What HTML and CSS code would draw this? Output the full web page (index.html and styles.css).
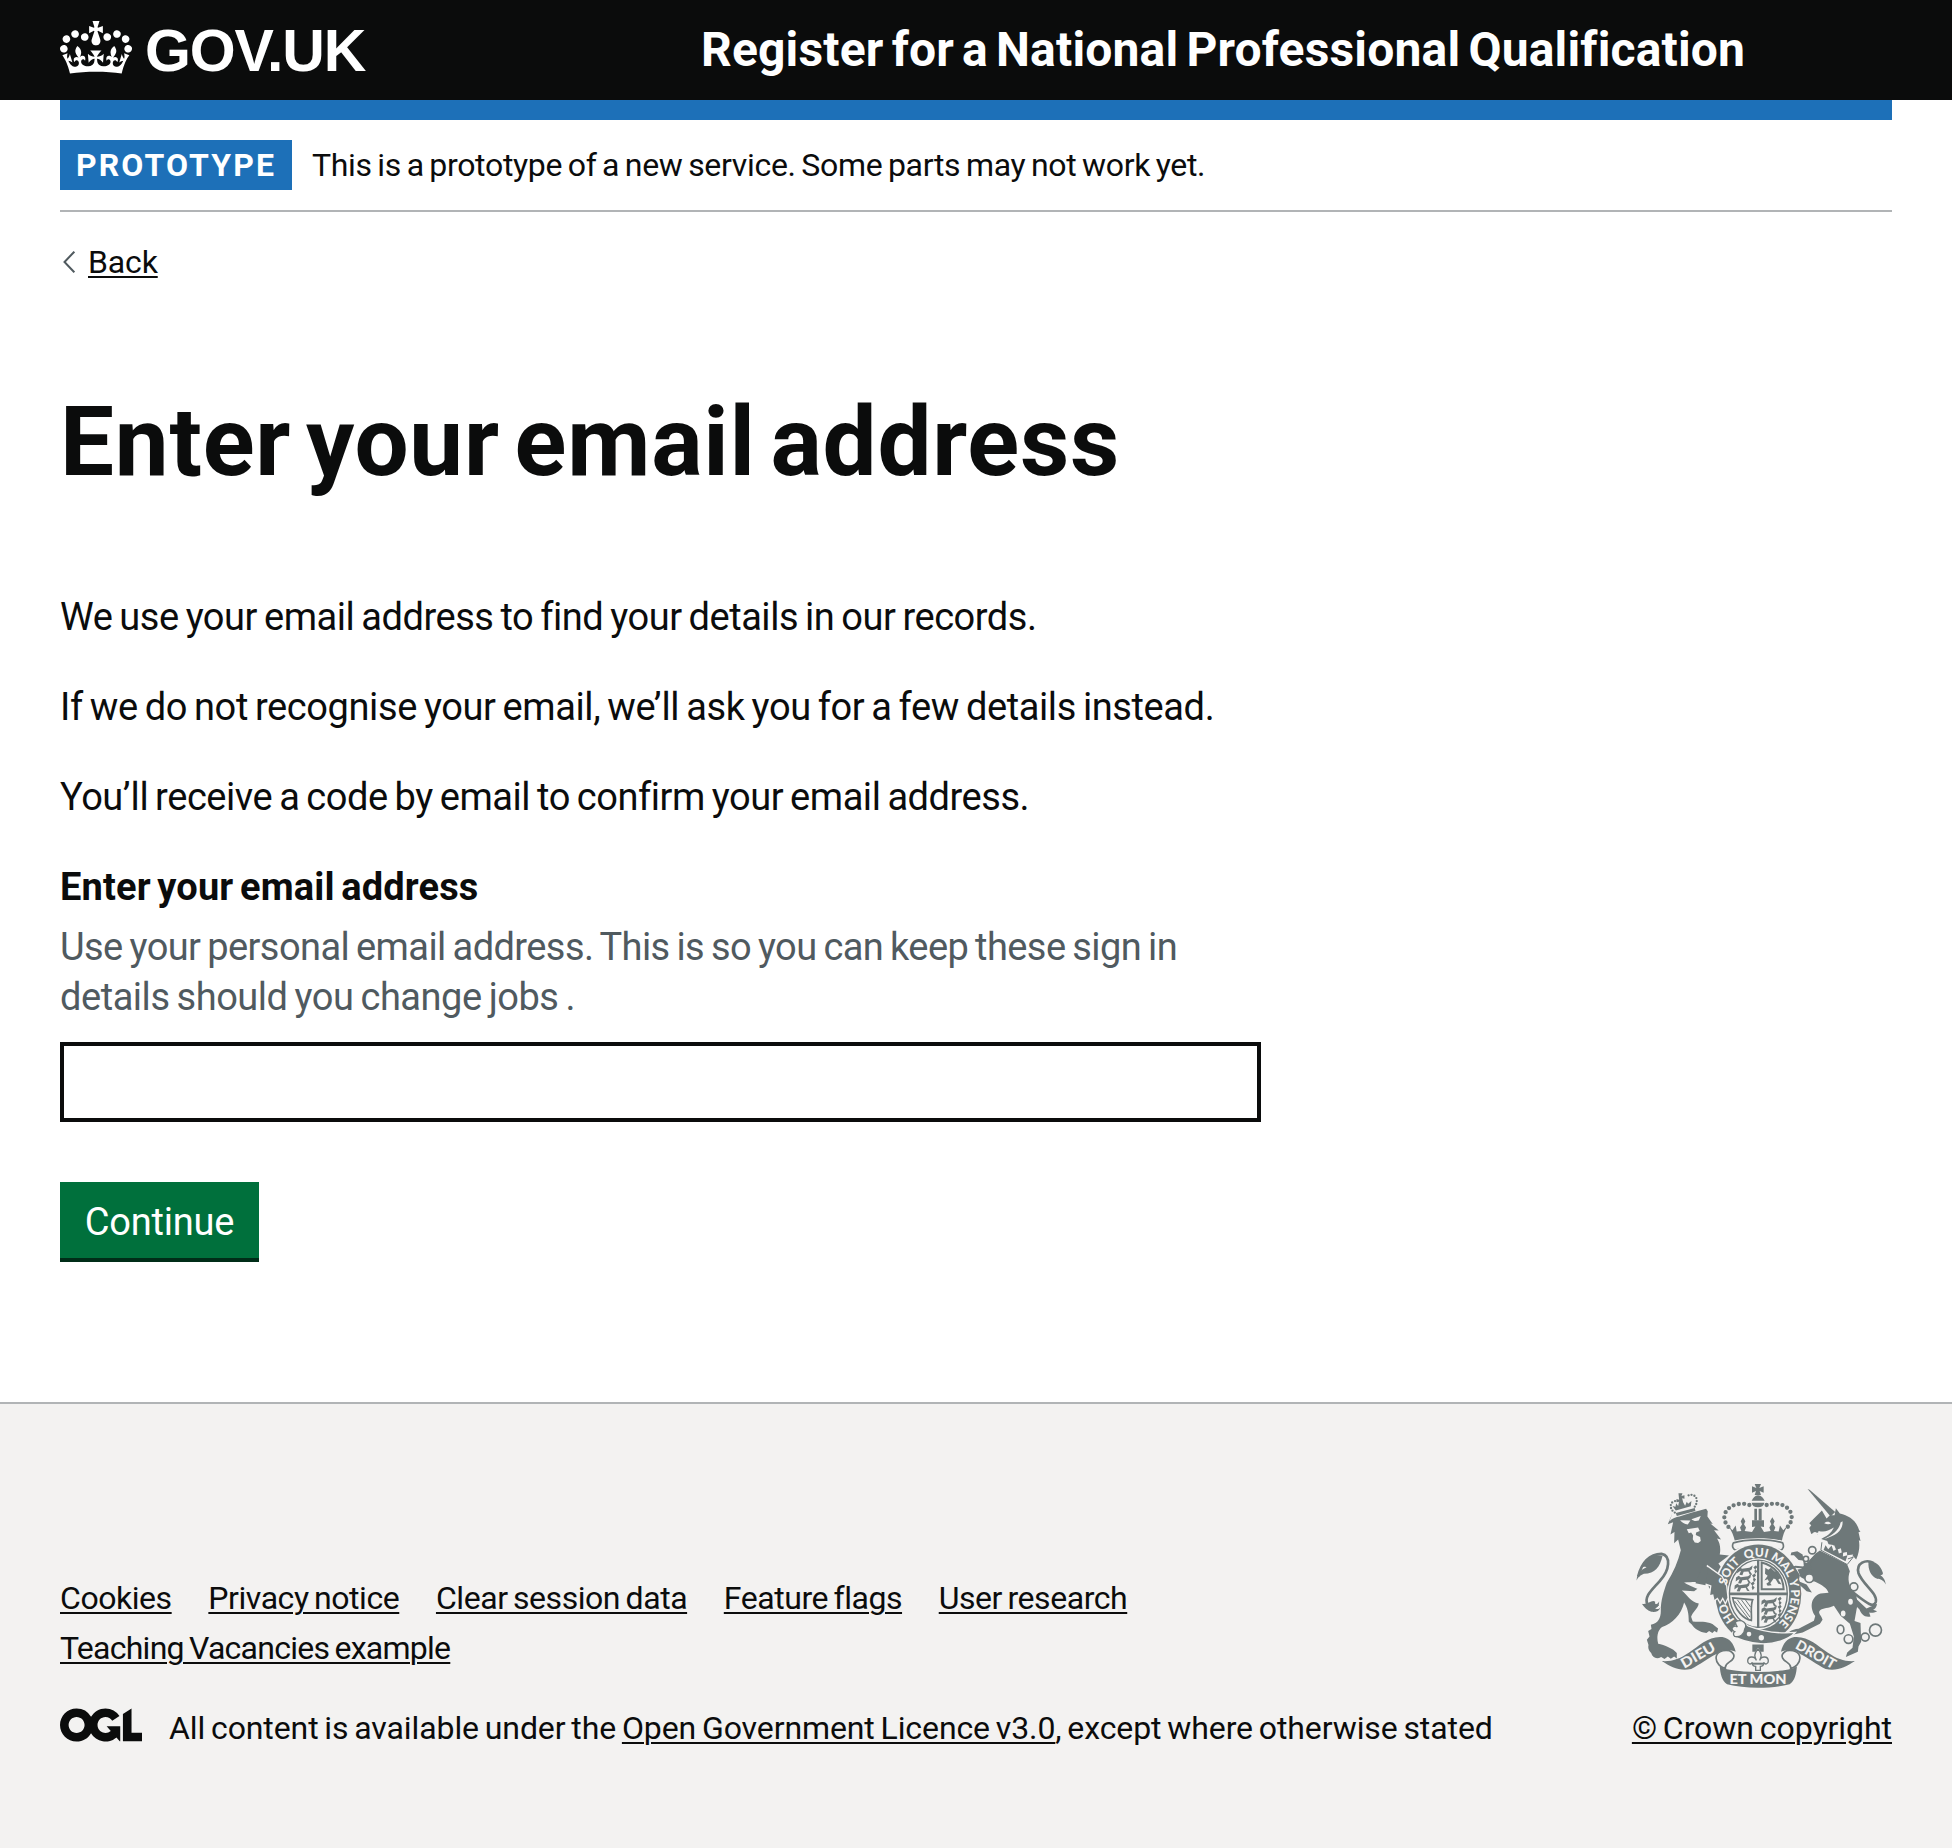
FILE: index.html
```html
<!DOCTYPE html>
<html lang="en">
<head>
<meta charset="utf-8">
<title>Enter your email address - Register for a National Professional Qualification</title>
<link rel="stylesheet" href="styles.css">
</head>
<body>
<header class="header">
  <div class="header-inner">
    <a class="logo" href="#">
      <svg class="logo-crown" viewBox="0 0 132 97" aria-hidden="true"><path fill="currentColor" fill-rule="evenodd" d="M25 30.2c3.5 1.5 7.7-.2 9.1-3.7 1.5-3.6-.2-7.8-3.9-9.2-3.6-1.4-7.6.3-9.1 3.9-1.4 3.5.3 7.5 3.9 9zM9 39.5c3.6 1.5 7.8-.2 9.2-3.7 1.5-3.6-.2-7.8-3.9-9.1-3.6-1.5-7.6.2-9.1 3.8-1.4 3.5.3 7.5 3.8 9zM4.4 57.2c3.5 1.5 7.7-.2 9.1-3.8 1.5-3.6-.2-7.7-3.9-9.1-3.5-1.5-7.6.3-9.1 3.8-1.4 3.5.3 7.6 3.9 9.1zm38.3-21.4c3.5 1.5 7.7-.2 9.1-3.8 1.5-3.6-.2-7.7-3.9-9.1-3.6-1.5-7.6.3-9.1 3.8-1.3 3.6.4 7.7 3.9 9.1zm64.4-5.6c-3.6 1.5-7.8-.2-9.1-3.7-1.5-3.6.2-7.8 3.8-9.2 3.6-1.4 7.7.3 9.2 3.9 1.3 3.5-.4 7.5-3.9 9zm15.9 9.3c-3.6 1.5-7.7-.2-9.1-3.7-1.5-3.6.2-7.8 3.7-9.1 3.6-1.5 7.7.2 9.2 3.8 1.5 3.5-.3 7.5-3.8 9zm4.7 17.7c-3.6 1.5-7.8-.2-9.2-3.8-1.5-3.6.2-7.7 3.9-9.1 3.6-1.5 7.7.3 9.2 3.8 1.3 3.5-.4 7.6-3.9 9.1zM89.3 35.8c-3.6 1.5-7.8-.2-9.2-3.8-1.4-3.6.2-7.7 3.9-9.1 3.6-1.5 7.7.3 9.2 3.8 1.4 3.6-.3 7.7-3.9 9.1zM69.7 17.7l8.9 4.7V9.3l-8.9 2.8c-.2-.3-.5-.6-.9-.9L72.4 0H59.6l3.5 11.2c-.3.3-.6.5-.9.9l-8.8-2.8v13.1l8.8-4.7c.3.3.6.7.9.9l-5 15.4v.1c-.2.8-.4 1.6-.4 2.4 0 4.1 3.1 7.5 7 8.1h.2c.3 0 .7.1 1 .1.4 0 .7 0 1-.1h.2c4-.6 7.1-4.1 7.1-8.1 0-.8-.1-1.7-.4-2.4V34l-5.1-15.4c.4-.2.7-.6 1-.9zM66 92.8c16.9 0 32.8 1.1 47.1 3.2 4-16.9 8.9-26.7 14-33.5l-9.6-3.4c1 4.9 1.1 7.2 0 10.2-1.5-1.4-3-4.3-4.2-8.7L108.6 76c2.8-2 5-3.2 7.5-3.3-4.4 9.4-10 11.9-13.6 11.2-4.3-.8-6.3-4.6-5.6-7.9 1-4.7 5.7-5.9 8-.5 4.3-8.7-3-11.4-7.6-8.8 7.1-7.2 7.9-13.5 2.1-21.1-8 6.1-8.1 12.3-4.5 20.8-4.7-5.4-12.1-2.5-9.5 6.2 3.4-5.2 7.9-2 7.2 3.1-.6 4.3-6.4 7.8-13.5 7.2-10.3-.9-10.9-8-11.2-13.8 2.5-.5 7.1 1.8 11 7.3L80.2 60c-4.1 4.4-8 5.3-12.3 5.4 1.4-4.4 8-11.6 8-11.6H55.5s6.4 7.2 7.9 11.6c-4.2-.1-8-1-12.3-5.4l1.4 16.4c3.9-5.5 8.5-7.7 10.9-7.3-.3 5.8-.9 12.8-11.1 13.8-7.2.6-12.9-2.9-13.5-7.2-.7-5 3.8-8.3 7.1-3.1 2.7-8.7-4.6-11.6-9.4-6.2 3.7-8.5 3.6-14.7-4.6-20.8-5.8 7.6-5 13.9 2.2 21.1-4.7-2.6-11.9.1-7.7 8.8 2.3-5.5 7.1-4.2 8.1.5.7 3.3-1.3 7.1-5.7 7.9-3.5.7-9-1.8-13.5-11.2 2.5.1 4.7 1.3 7.5 3.3l-4.7-15.4c-1.2 4.4-2.7 7.2-4.3 8.7-1.1-3-.9-5.3 0-10.2l-9.5 3.4c5 6.9 9.9 16.7 14 33.5 14.8-2.1 30.8-3.2 47.7-3.2z"/></svg>
      <span class="logo-text">GOV.UK</span>
    </a>
    <a class="service-name" href="#">Register for a National Professional Qualification</a>
  </div>
</header>

<div class="width">
  <div class="header-bar"></div>
  <div class="phase-banner">
    <strong class="tag">PROTOTYPE</strong>
    <span class="phase-text">This is a prototype of a new service. Some parts may not work yet.</span>
  </div>
  <a class="back-link" href="#">
    <svg class="back-arrow" viewBox="0 0 12 22" aria-hidden="true"><path d="M11.3 .7 1.5 11l9.8 10.3" fill="none" stroke="#505a5f" stroke-width="2"/></svg>
    <span class="link">Back</span>
  </a>

  <main class="main">
    <h1 class="title">Enter your email address</h1>
    <p class="body-text">We use your email address to find your details in our records.</p>
    <p class="body-text body-text-loose">If we do not recognise your email, we’ll ask you for a few details instead.</p>
    <p class="body-text">You’ll receive a code by email to confirm your email address.</p>
    <form class="form">
      <label class="label" for="email">Enter your email address</label>
      <div class="hint">Use your personal email address. This is so you can keep these sign in<br><span class="hint-end">details should you change jobs .</span></div>
      <input class="input" id="email" type="email">
      <button class="button" type="button">Continue</button>
    </form>
  </main>
</div>

<footer class="footer">
  <div class="footer-inner">
    <div class="footer-main">
      <ul class="footer-links">
        <li><a class="link tight" href="#">Cookies</a></li>
        <li><a class="link tight" href="#">Privacy notice</a></li>
        <li><a class="link tight" href="#">Clear session data</a></li>
        <li><a class="link tight" href="#">Feature flags</a></li>
        <li><a class="link tight" href="#">User research</a></li>
        <li><a class="link tighter" href="#">Teaching Vacancies example</a></li>
      </ul>
      <div class="licence">
        <svg class="ogl" viewBox="0 0 483.2 195.7" aria-label="Open Government Licence"><path fill="currentColor" d="M421.5 142.8V.1l-50.7 32.3v161.1h112.4v-50.7zm-122.3-9.6A47.12 47.12 0 0 1 221 97.8c0-26 21.1-47.1 47.1-47.1 16.7 0 31.4 8.7 39.7 21.8l42.7-27.2A97.63 97.63 0 0 0 268.1 0c-36.5 0-68.3 20.1-85.1 49.7A98 98 0 0 0 97.8 0C43.9 0 0 43.9 0 97.8s43.9 97.8 97.8 97.8c36.5 0 68.3-20.1 85.1-49.7a97.76 97.76 0 0 0 149.6 25.4l19.4 22.2h3v-87.8h-80l24.3 27.5zM97.8 145c-26 0-47.1-21.1-47.1-47.1s21.1-47.1 47.1-47.1 47.1 21.1 47.1 47.1S123.8 145 97.8 145"/></svg>
        <span>All content is available under the <a class="link" href="#">Open Government Licence v3.0</a>, except where otherwise stated</span>
      </div>
    </div>
    <div class="copyright">
      <svg class="arms" viewBox="78 72 750 613" aria-hidden="true">
        <defs>
          <path id="garter" d="M445 514C391 514 347 464 347 402S391 290 445 290 543 340 543 402 499 514 445 514"/>
          <g id="walker"><path d="M2 8l8-5 6 4 22-3 10-7-3 12-6 4 8 12-8-1-4-9-14 1-4 10-9-1 5-12-5 2-7 5zM50 2l8-6 4 6-6 6 6 6-6 8-3-8 2-5z"/></g>
        </defs>
        <g class="arms-fill">
          <!-- centre crown -->
          <path d="M434 72h19l-5 12 13-5v19l-12-5 4 12h-19l4-12-12 5V79l13 5zM425 122c4-8 10-15 19-16 10 1 16 8 20 16zM425 128h38c-1 9-8 14-19 14s-18-5-19-14zM433 146h8v36h-8zM446 146h9v36h-9z"/>
          <path class="beads" d="M418 135C392 126 358 134 346 158c-8 17 0 34 12 46M470 135c28-9 60-2 72 22 8 18 0 34-11 47"/>
          <path d="M354 197l13 14 10-14 3 18 14-2-4-10 6-10-4-9 7-12 7 12-4 9 6 10-4 10 22 3 10-16-10 1v-20h36v20l-10-1 10 16 20-3-4-10 6-10-4-9 7-12 7 12-4 9 6 10-4 10 14 2 4-18 10 14 13-14c-10 18-15 32-17 45-40-9-104-9-142 0-3-13-9-29-20-45z"/>
          <path d="M370 249c-6 10 0 20 8 22 40-18 94-18 133 0 9-3 12-12 7-22-35-12-111-12-148 0z" fill="none" stroke="#6e7879" stroke-width="5"/>
          <!-- lion -->
          <path d="M197 159l57-15 2 9-56 15z"/>
          <path class="beads small" d="M194 158c-14-8-16-26-6-32 8-4 14-4 20-1M254 140c8-10 8-26 0-32-8-5-16-4-22 0"/>
          <path d="M205 100h12l-3 8 9-2v10l-7-1 3 12 6 10 5-12 4 6 10-8-2 16-45 13-10-14 9 2 2-10 6 8 3-14-8 3v-10l8 2z"/>
          <path d="M178 184c8-8 20-13 30-14 24-10 50-16 80-24l5 8-1 16 16 22-7-1 25 21-14-1 21 28-12-3c8 12 12 30 8 48l28 3-32 24 28 38 9 45-5 18-12 14-5-15-14 9-5-18-10 4-3-22-11 2c0-20-28-22-75-18 20 12 34 16 40 19l-10 7-37-2c17 14 27 35 51 39-3 17-18 24-23 40l5 14c22 2 39-2 59 8l17 13-3 12-8-4-6 6-10-6-8 6c-22-4-34-12-44-26l-9-8c0-28-4-42-14-58-8 36-36 64-66 74-12 8-18 28-12 50 18 4 46 14 56 28l0 16-8-6-10 7-9-7-10 8-10-6c-14 8-26 2-30-12-8-8-10-16-8-24l-5-16 8-10-4-16 10-6-2-13c22-4 30-20 30-42-1-26 8-56 18-84 20-32 34-64 42-98l-8-32-12 11 1-34-12 8 8-37-16 6 14-34z"/>
          <path class="tail" d="M84 350c10-40 34-66 70-68 30 6 24 50-4 80-24 28-50 48-38 72 8 14 20 10 32 0"/>
          <path d="M79 362c2-24 14-32 30-40-6-2-12-2-16 2 8-28 32-44 64-36-8 34-22 52-56 54-10 4-18 10-22 20zM95 432c18 4 30-14 40-6-2 12 8 8 12-2 0 14-6 18-12 22 10 4 12 0 16-4-4 12-14 16-28 14-12-4-20-12-28-24z"/>
          <path class="cut" d="M210 181l31 1-8 12c-10-2-18-6-23-13zM244 178l28-10-6 14c-8 2-16 2-22-4zM230 208l34-5 5 10-11 5-1 7 13 6 2 12-8 6-10-1-6-10 1-12-6-8-7 2z"/>
          <!-- unicorn body -->
          <path d="M618 280l12-8 82 42 8 20c-8 22-4 44 12 62 10 14 14 34 8 54l-6 34 18 6 2 56-8 14-2 16-36 16 4-14 16-14 4-34-12-38-28-24-20-30c-14 8-34 6-42 14-8 8 6 16 8 28l-8 12-52 26-34 8-18 12-6-3c10-16 24-26 46-28l46-24 4-14c-20-30-10-60 16-68l24-2c-4-14-20-24-42-34l-22-2-22-12-24 2 0-20 28-6z"/>
          <path class="tail" d="M724 394C760 420 790 450 798 426c6-26-38-50-52-86-8-30 22-44 46-30"/>
          <path d="M776 304c20 0 36 12 42 32 4 8-2 10-6 10 8 6 14 12 16 28-8-14-16-16-26-17-18-8-28-26-26-53zM742 420l28 26 32-14c-2 10-6 16-12 18l12 4c-10 6-18 6-24 4l4 12c-18 4-28-8-33-21l-14-14z"/>
          <g class="cut"><circle cx="732" cy="381" r="9"/><ellipse cx="722" cy="426" rx="7" ry="9"/><ellipse cx="700" cy="461" rx="7" ry="9"/></g>
          <g fill="none" stroke="#6e7879" stroke-width="5"><circle cx="732" cy="381" r="12"/><ellipse cx="692" cy="509" rx="10" ry="13"/><circle cx="716" cy="538" r="13"/><circle cx="766" cy="532" r="12"/><circle cx="797" cy="511" r="18"/></g>
          <!-- unicorn head -->
          <path d="M593 87l6 2 77 67-14 14z"/>
          <path d="M650 176l10-10 14 0 4-21 12 16c28 6 50 22 58 50l4 4-6 2 6 26-5-2c3 14 2 36-8 58l-9-10-12 4-10-12-12 0-10-12-10-2-6-12-14-2-4-10-18-6c16-8 30-16 38-34-20 12-30 14-46 10l-3 11-7-8-12 6-6-18 6-8-6-6 14-14 16-16 8-8z"/>
          <path d="M698 184c2 26-16 42-56 54 28-14 46-28 50-50z" class="cut"/>
          <path d="M643 190c8-7 15-5 21 0-6 4-12 4-21 0zM610 217l22 2-16 6z" class="cut"/>
          <!-- unicorn collar -->
          <path d="M636 248l7 10 9-9 10 13 11-6 6 14 14-5 3 14 15-3 1 10 18-2-12 32-86-44z" class="cut"/>
          <path d="M636 247l-3 24 79 43 18-22-16 5" fill="none" stroke="#6e7879" stroke-width="3"/>
          <path d="M641 270l6-14 8 12 10-11 6 16 12-8 4 16 13-5-1 14 14-4-6 18z"/>
          <!-- garter and shield -->
          <ellipse class="cut" cx="445" cy="402" rx="134" ry="153"/>
          <ellipse cx="445" cy="402" rx="129" ry="148"/>
          <ellipse class="cut" cx="445" cy="402" rx="93" ry="107"/>
          <ellipse cx="445" cy="402" rx="87" ry="101" fill="none" stroke="#6e7879" stroke-width="4"/>
          <path d="M441 300h7v205h-7zM358 398h174v8H358z"/>
          <use href="#walker" x="380" y="320"/><use href="#walker" x="376" y="345"/><use href="#walker" x="372" y="369"/>
          <use href="#walker" x="453" y="415"/><use href="#walker" x="453" y="439"/><use href="#walker" x="453" y="463"/>
          <path d="M455 308v80h66c-2-42-28-70-66-80z" fill="none" stroke="#6e7879" stroke-width="6"/>
          <path d="M466 324l9 6 8-6 10 10 14 2-4 6 10 12-8 6 10 14-10-2-8-14-6-2-10 14 4 6-12 2-4-6 8-6-4-8-10 4 10-14-8-6z"/>
          <path d="M368 414l60 6c-8 20-2 44-4 62-24-4-50-32-56-68z" fill="none" stroke="#6e7879" stroke-width="5"/>
          <path d="M382 420l38 52M394 420l28 38M406 420l16 22M374 424l42 54" fill="none" stroke="#6e7879" stroke-width="3"/>
          <path d="M374 500l20-14 20 12c50 20 98 24 142 20-22 22-62 36-104 34-30-2-58-8-86-26z" stroke="#f3f2f1" stroke-width="4"/>
          <path d="M376 486c22-10 38 6 28 22 0 16-16 26-30 22-6-6-4-12 0-14-8-4-10-10-6-14 6-4 10-4 14 0-4-6-6-10-6-16z" class="cut" stroke="#6e7879" stroke-width="4"/>
          <circle class="cut" cx="417" cy="523" r="7"/><circle class="cut" cx="454" cy="534" r="8"/>
          <!-- lion foreleg and unicorn hooves resting on the garter -->
          <path d="M292 318l44 32 14 28 4 36-8 18-8-16-8 14-8-14-10 8-4-18-10 2 4-30-30-10z" stroke="#f3f2f1" stroke-width="4"/>
          <path d="M280 312l14 12-8 52-30-6z"/>
          <path d="M618 280l-18 22 6 30-24-10-2-20-14-2-14-14-10 0 2-8 18-4 16 10 4 22 18 8zM606 322l-28 4-22-2 14 22-4 18 24 10 16 24-16-4-18-16-20-12-4-24-8-18 16-6z"/>
          <g class="cut" stroke="#6e7879" stroke-width="5"><circle cx="607" cy="271" r="11"/><circle cx="588" cy="297" r="8"/><circle cx="598" cy="355" r="13"/></g>
          <!-- badge under the garter -->
          <path d="M427 554h34v22h-9l-8-12-8 12h-9z"/>
          <path d="M444 568c-14 14-10 24-5 34-4-14-26-14-26 2 0 10 10 12 14 4 0 10 6 12 10 12v12h14v-12c4 0 10-2 10-12 4 8 14 6 14-4 0-16-22-16-26-2 5-10 9-20-5-34z" fill="#f3f2f1" stroke="#6e7879" stroke-width="4"/><path d="M428 609h32v6h-32z"/>
          <!-- motto ribbon -->
          <path d="M155 604c30 2 52-6 82-26 30-20 60-50 100-46 22 4 34 20 40 44-22-8-48-4-56 6-30 14-50 32-78 46-34 8-60-6-88-24zM735 604c-30 2-52-6-82-26-30-20-60-50-100-46-22 4-34 20-40 44 22-8 48-4 56 6 30 14 50 32 78 46 34 8 60-6 88-24z"/>
          <path class="cut" d="M358 573c-22-4-40 6-40 22s14 28 28 32c-4-18 18-18 24-32 4-8 0-16-12-22zM530 573c22-4 40 6 40 22s-14 28-28 32c4-18-18-18-24-32-4-8 0-16 12-22z" stroke="#6e7879" stroke-width="5"/>
          <path d="M329 620c8 6 18 10 30 10 56 9 114 9 172 0 12 0 22-4 30-10-2 22-6 44-22 54-58 14-134 14-188 0-16-10-20-32-22-54z"/>
        </g>
        <g class="motto">
          <text><textPath href="#garter" startOffset="16.5%">HO</textPath></text>
          <text><textPath href="#garter" startOffset="35%">SOIT</textPath></text>
          <text><textPath href="#garter" startOffset="49%">QUI</textPath></text>
          <text><textPath href="#garter" startOffset="61.5%">MAL</textPath></text>
          <text><textPath href="#garter" startOffset="70.5%">Y</textPath></text>
          <text><textPath href="#garter" startOffset="81.5%">PENSE</textPath></text>
          <text class="motto-large" transform="translate(271 599) rotate(-30)" textLength="112" lengthAdjust="spacingAndGlyphs">DIEU</text>
          <text class="motto-large" transform="translate(611 597) rotate(29)" textLength="132" lengthAdjust="spacingAndGlyphs">DROIT</text>
          <text class="motto-large" transform="translate(444 673)" textLength="172" lengthAdjust="spacingAndGlyphs">ET MON</text>
        </g>
      </svg>
      <a class="link crown-link" href="#">© Crown copyright</a>
    </div>
  </div>
</footer>
</body>
</html>
```
FILE: styles.css
```css
* {
  box-sizing: border-box;
}

body {
  margin: 0;
  background: #fff;
  color: #0b0c0c;
  font-family: Roboto, "Noto Sans", sans-serif;
  font-size: 32px;
  line-height: 40px;
  word-spacing: -2px;
}

.link {
  color: #0b0c0c;
  text-decoration: underline;
  text-decoration-thickness: 2px;
  text-underline-offset: 3px;
}

.tight {
  letter-spacing: -0.45px;
}

.tighter {
  letter-spacing: -0.74px;
}

.width {
  margin: 0 60px;
}

/* Header */
.header {
  height: 100px;
  padding: 0 60px;
  background: #0b0c0c;
}

.header-inner {
  display: grid;
  grid-template-columns: 641px 1fr;
  align-items: start;
}

.logo {
  display: flex;
  gap: 13px;
  padding-top: 20px;
  color: #fff;
  text-decoration: none;
}

.logo-crown {
  width: 72px;
  height: 53px;
  margin-top: 1px;
}

.logo-text {
  font-family: "Liberation Sans", Arial, sans-serif;
  font-size: 59px;
  font-weight: 700;
  line-height: 62px;
  letter-spacing: -1.2px;
}

.service-name {
  padding-top: 20px;
  color: #fff;
  font-size: 48px;
  font-weight: 700;
  line-height: 60px;
  letter-spacing: 0.17px;
  word-spacing: -4px;
  text-decoration: none;
  white-space: nowrap;
}

.header-bar {
  height: 20px;
  background: #1d70b8;
}

/* Phase banner */
.phase-banner {
  display: flex;
  gap: 20px;
  padding: 20px 0;
  border-bottom: 2px solid #b1b4b6;
  line-height: 50px;
}

.tag {
  width: 232px;
  height: 50px;
  padding-left: 16px;
  background: #1d70b8;
  color: #fff;
  line-height: 51px;
  letter-spacing: 2.1px;
}

.phase-text {
  letter-spacing: -0.32px;
}

.back-link {
  display: flex;
  align-items: center;
  gap: 13px;
  width: max-content;
  margin-top: 30px;
  padding-left: 3px;
  text-decoration: none;
  letter-spacing: -0.15px;
}

.back-arrow {
  width: 12px;
  height: 22px;
}

/* Main content */
.main {
  padding: 110px 0 140px;
}

.title {
  margin: 0 0 100px;
  font-size: 96px;
  font-weight: 700;
  line-height: 100px;
  letter-spacing: 0.8px;
  word-spacing: -10px;
}

.body-text {
  margin: 0 0 40px;
  font-size: 38px;
  line-height: 50px;
  letter-spacing: -0.46px;
}

.body-text-loose {
  letter-spacing: -0.4px;
}

.form {
  display: flex;
  flex-direction: column;
  align-items: flex-start;
  font-size: 38px;
  line-height: 50px;
}

.label {
  margin-bottom: 10px;
  font-weight: 700;
  letter-spacing: 0.15px;
  word-spacing: -3px;
}

.hint {
  margin-bottom: 20px;
  color: #505a5f;
  letter-spacing: -0.58px;
}

.hint-end {
  letter-spacing: -0.46px;
}

.input {
  width: 1201px;
  height: 80px;
  margin: 0 0 60px;
  padding: 10px;
  border: 4px solid #0b0c0c;
  border-radius: 0;
  background: #fff;
  font: inherit;
}

.button {
  width: 199px;
  height: 76px;
  margin: 0 0 4px;
  padding: 3px 0 0;
  border: 0;
  background: #00703c;
  box-shadow: 0 4px 0 #002d18;
  color: #fff;
  font: inherit;
  letter-spacing: -0.2px;
}

/* Footer */
.footer {
  padding: 80px 60px 100px;
  border-top: 2px solid #b1b4b6;
  background: #f3f2f1;
}

.footer-inner {
  display: flex;
  justify-content: space-between;
  align-items: flex-end;
}

.footer-links {
  display: flex;
  flex-wrap: wrap;
  column-gap: 36.7px;
  width: 1240px;
  margin: 0 0 35px;
  padding: 0;
  list-style: none;
  line-height: 50px;
}

.licence {
  display: flex;
  gap: 27px;
  letter-spacing: -0.1px;
  white-space: nowrap;
}

.ogl {
  width: 82px;
  height: 34px;
}

.copyright {
  display: flex;
  flex-direction: column;
  align-items: flex-end;
}

.crown-link {
  letter-spacing: -0.05px;
}

.arms {
  width: 250px;
  height: 204px;
  margin: 0 6px 20px 0;
}

.arms-fill {
  fill: #6e7879;
}

.cut {
  fill: #f3f2f1;
}

.beads {
  fill: none;
  stroke: #6e7879;
  stroke-width: 13;
  stroke-linecap: round;
  stroke-dasharray: 0 16;
}

.small {
  stroke-width: 7;
  stroke-dasharray: 0 9;
}

.tail {
  fill: none;
  stroke: #6e7879;
  stroke-width: 8;
}

.motto {
  fill: #f3f2f1;
  font-family: Lato, sans-serif;
  font-size: 36px;
  font-weight: 900;
  letter-spacing: 0;
  text-anchor: middle;
  word-spacing: 0;
}

.motto-large {
  font-size: 42px;
}
```
